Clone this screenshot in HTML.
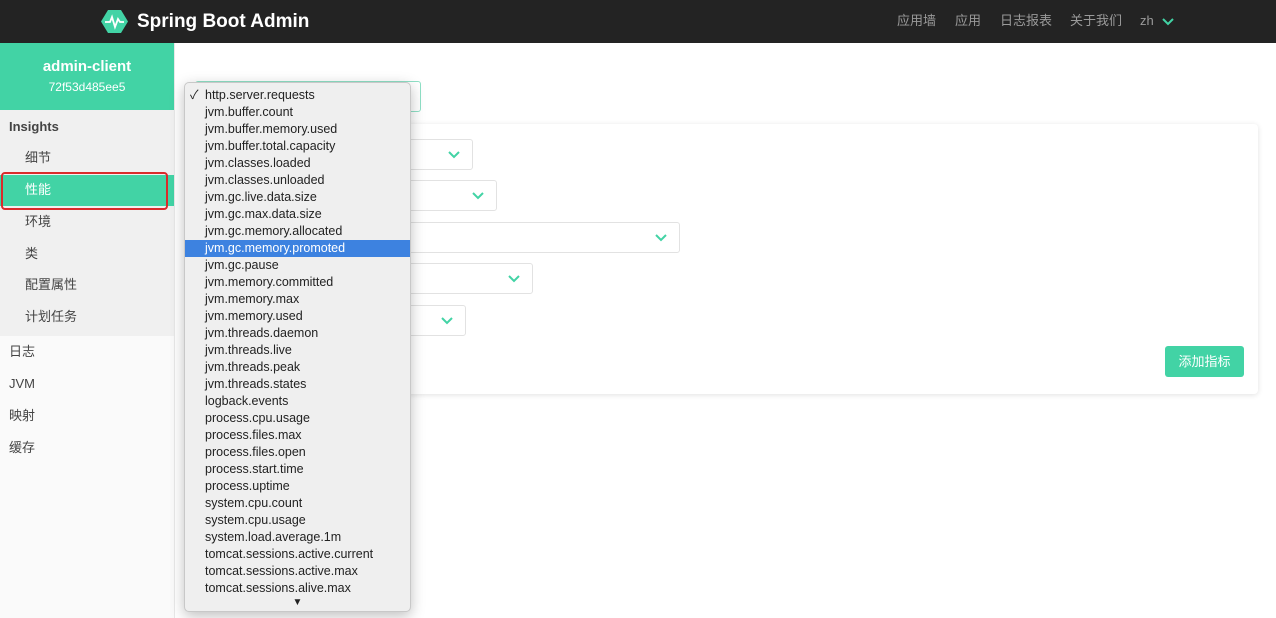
<!DOCTYPE html>
<html><head><meta charset="utf-8"><style>
*{box-sizing:border-box;margin:0;padding:0}
body{width:1276px;height:618px;overflow:hidden;background:#fff;font-family:"Liberation Sans","Noto Sans CJK SC",sans-serif;position:relative;color:#333}
.nav{position:absolute;left:0;top:0;width:1276px;height:43px;background:#232323}
.brand{position:absolute;left:137px;top:11px;line-height:22px;color:#fff;font-size:19px;font-weight:bold}
.navr{position:absolute;top:13px;line-height:16px;font-size:13px;color:#9a9a9a}
.side{position:absolute;left:0;top:43px;width:175px;height:575px;background:#fafafa;border-right:1px solid #e8e8e8}
.sh{position:absolute;left:0;top:0;width:174px;height:67px;background:#42d3a5;color:#fff;text-align:center}
.ins{position:absolute;left:0;top:67px;width:174px;height:226px;background:#f0f0f0}
.it{position:absolute;font-size:13px;line-height:16px;color:#444}
.sel{position:absolute;height:31px;border:1px solid #e2e2e2;border-radius:3px;background:#fff}
.chev{position:absolute;right:12px;top:11px}
.dd{position:absolute;left:184px;top:82px;width:227px;height:530px;background:#efefef;border:1px solid #c8c8c8;border-radius:5px;box-shadow:0 4px 14px rgba(0,0,0,.25)}
.dd div{height:17px;line-height:17px;font-size:12.5px;padding-left:20px;color:#222;white-space:nowrap}
.dd .hl{background:#3d82e0;color:#fff}
</style></head><body>
<div class="nav">
<svg style="position:absolute;left:101px;top:9px" width="27" height="25" viewBox="0 0 27 25"><polygon points="7,1 20,1 27,12.5 20,24 7,24 0,12.5" fill="#42d3a5"/><polyline points="4,13 9,13 11,8 14,18 17,10 19,13 23,13" fill="none" stroke="#fff" stroke-width="1.8"/></svg>
<div class="brand">Spring Boot Admin</div>
<div class="navr" style="left:897px">应用墙</div>
<div class="navr" style="left:955px">应用</div>
<div class="navr" style="left:1000px">日志报表</div>
<div class="navr" style="left:1070px">关于我们</div>
<div class="navr" style="left:1140px">zh</div>
<svg style="position:absolute;left:1162px;top:18px" width="12" height="8"><polyline points="1,1 6,6 11,1" fill="none" stroke="#42d3a5" stroke-width="2"/></svg>
</div>
<div class="side">
<div class="sh"><div style="font-size:15px;line-height:18px;font-weight:bold;padding-top:15px">admin-client</div><div style="font-size:12px;line-height:14px;margin-top:4px">72f53d485ee5</div></div>
<div class="ins"></div>
<div class="it" style="left:9px;top:76px;font-weight:bold">Insights</div>
<div class="it" style="left:25px;top:107px">细节</div>
<div style="position:absolute;left:0;top:132px;width:174px;height:31px;background:#42d3a5"></div>
<div style="position:absolute;left:1px;top:129px;width:167px;height:38px;border:2px solid #d92b2b;border-radius:4px"></div>
<div class="it" style="left:25px;top:139px;color:#fff">性能</div>
<div class="it" style="left:25px;top:171px">环境</div>
<div class="it" style="left:25px;top:203px">类</div>
<div class="it" style="left:25px;top:234px">配置属性</div>
<div class="it" style="left:25px;top:266px">计划任务</div>
<div class="it" style="left:9px;top:301px">日志</div>
<div class="it" style="left:9px;top:333px">JVM</div>
<div class="it" style="left:9px;top:365px">映射</div>
<div class="it" style="left:9px;top:397px">缓存</div>
</div>
<div class="sel" style="left:195px;top:81px;width:226px;border-color:#8fe0c6"></div>
<div style="position:absolute;left:360px;top:124px;width:898px;height:270px;background:#fff;border-radius:4px;box-shadow:0 1px 6px rgba(0,0,0,.12)"></div>
<div class="sel" style="left:300px;top:139px;width:173px"><svg class="chev" width="12" height="8"><polyline points="1,1 6,6 11,1" fill="none" stroke="#42d3a5" stroke-width="2"/></svg></div>
<div class="sel" style="left:300px;top:180px;width:197px"><svg class="chev" width="12" height="8"><polyline points="1,1 6,6 11,1" fill="none" stroke="#42d3a5" stroke-width="2"/></svg></div>
<div class="sel" style="left:300px;top:222px;width:380px"><svg class="chev" width="12" height="8"><polyline points="1,1 6,6 11,1" fill="none" stroke="#42d3a5" stroke-width="2"/></svg></div>
<div class="sel" style="left:300px;top:263px;width:233px"><svg class="chev" width="12" height="8"><polyline points="1,1 6,6 11,1" fill="none" stroke="#42d3a5" stroke-width="2"/></svg></div>
<div class="sel" style="left:300px;top:305px;width:166px"><svg class="chev" width="12" height="8"><polyline points="1,1 6,6 11,1" fill="none" stroke="#42d3a5" stroke-width="2"/></svg></div>
<div style="position:absolute;left:1165px;top:346px;width:79px;height:31px;background:#42d3a5;border-radius:3px;color:#fff;font-size:13px;text-align:center;line-height:31px">添加指标</div>
<div class="dd" style="padding-top:4px">
<div style="position:relative"><span style="position:absolute;left:5px">✓</span>http.server.requests</div>
<div>jvm.buffer.count</div><div>jvm.buffer.memory.used</div><div>jvm.buffer.total.capacity</div><div>jvm.classes.loaded</div><div>jvm.classes.unloaded</div><div>jvm.gc.live.data.size</div><div>jvm.gc.max.data.size</div><div>jvm.gc.memory.allocated</div><div class="hl">jvm.gc.memory.promoted</div><div>jvm.gc.pause</div><div>jvm.memory.committed</div><div>jvm.memory.max</div><div>jvm.memory.used</div><div>jvm.threads.daemon</div><div>jvm.threads.live</div><div>jvm.threads.peak</div><div>jvm.threads.states</div><div>logback.events</div><div>process.cpu.usage</div><div>process.files.max</div><div>process.files.open</div><div>process.start.time</div><div>process.uptime</div><div>system.cpu.count</div><div>system.cpu.usage</div><div>system.load.average.1m</div><div>tomcat.sessions.active.current</div><div>tomcat.sessions.active.max</div><div>tomcat.sessions.alive.max</div>
<div style="padding-left:0;text-align:center;font-size:10px;height:12px;line-height:12px">▼</div>
</div>
</body></html>
